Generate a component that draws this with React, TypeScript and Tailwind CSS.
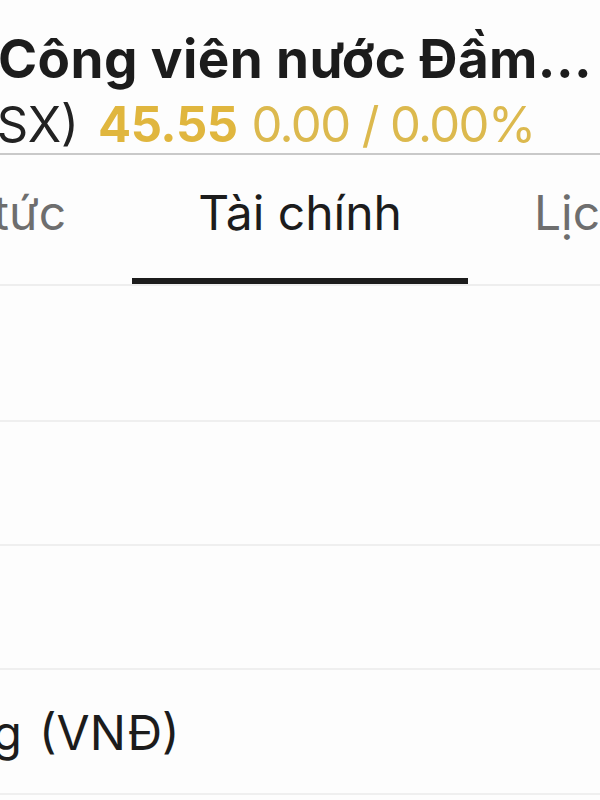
import React from "react";

const font = { fontFamily: "Inter, 'Noto Sans', sans-serif" };

function Tab({ label, active }: { label: string; active?: boolean }) {
  return (
    <div className="flex shrink-0 flex-col items-stretch">
      <div
        className={`whitespace-nowrap px-[66px] pt-[34px] pb-[41px] text-center text-[48px] leading-[48px] ${
          active ? "text-[#1c1c1c]" : "text-[#6e6e6e]"
        }`}
      >
        {label}
      </div>
      <div className={`h-[6px] ${active ? "bg-[#1c1c1c]" : "bg-transparent"}`} />
    </div>
  );
}

export default function App() {
  return (
    <div
      className="flex h-[800px] w-[600px] flex-col overflow-hidden bg-[#fdfdfd]"
      style={font}
    >
      {/* Header */}
      <div className="flex flex-col border-b-2 border-[#c9c9c9] pt-[29px] pb-[4px]">
        <div className="ml-[-2px] whitespace-nowrap text-[53px] font-bold leading-[60px] tracking-[0.4px] text-[#1c1c1c]">
          Công viên nước Đầm...
        </div>
        <div className="mt-[11px] flex items-baseline whitespace-nowrap text-[49px] leading-[49px]">
          <div className="flex w-[79px] shrink-0 justify-end">
            <span className="shrink-0 text-[#222222]">DSN (HSX)</span>
          </div>
          <span className="ml-[19px] font-bold tracking-[-0.5px] text-[#e0b63e]">45.55</span>
          <span className="ml-[14px] tracking-[-1.6px] text-[#dcb94e]">0.00 / 0.00%</span>
        </div>
      </div>

      {/* Tabs */}
      <div className="flex justify-center overflow-hidden border-b-2 border-[#eeeeee] pl-[6px]">
        <Tab label="Tin tức" />
        <Tab label="Tài chính" active />
        <Tab label="Lịch sử" />
      </div>

      {/* Rows */}
      <div className="flex flex-col">
        <div className="h-[136px] border-b-2 border-[#efefef]" />
        <div className="h-[124px] border-b-2 border-[#efefef]" />
        <div className="h-[124px] border-b-2 border-[#efefef]" />
        <div className="flex h-[125px] items-center border-b-2 border-[#efefef] pt-[2px] text-[48px] leading-[48px] text-[#1c1c1c]">
          <div className="flex w-[22px] shrink-0 justify-end">
            <span className="shrink-0 whitespace-nowrap">Đơn vị: Tỷ đồng</span>
          </div>
          <span className="ml-[17px] whitespace-nowrap">(VNĐ)</span>
        </div>
      </div>
    </div>
  );
}
